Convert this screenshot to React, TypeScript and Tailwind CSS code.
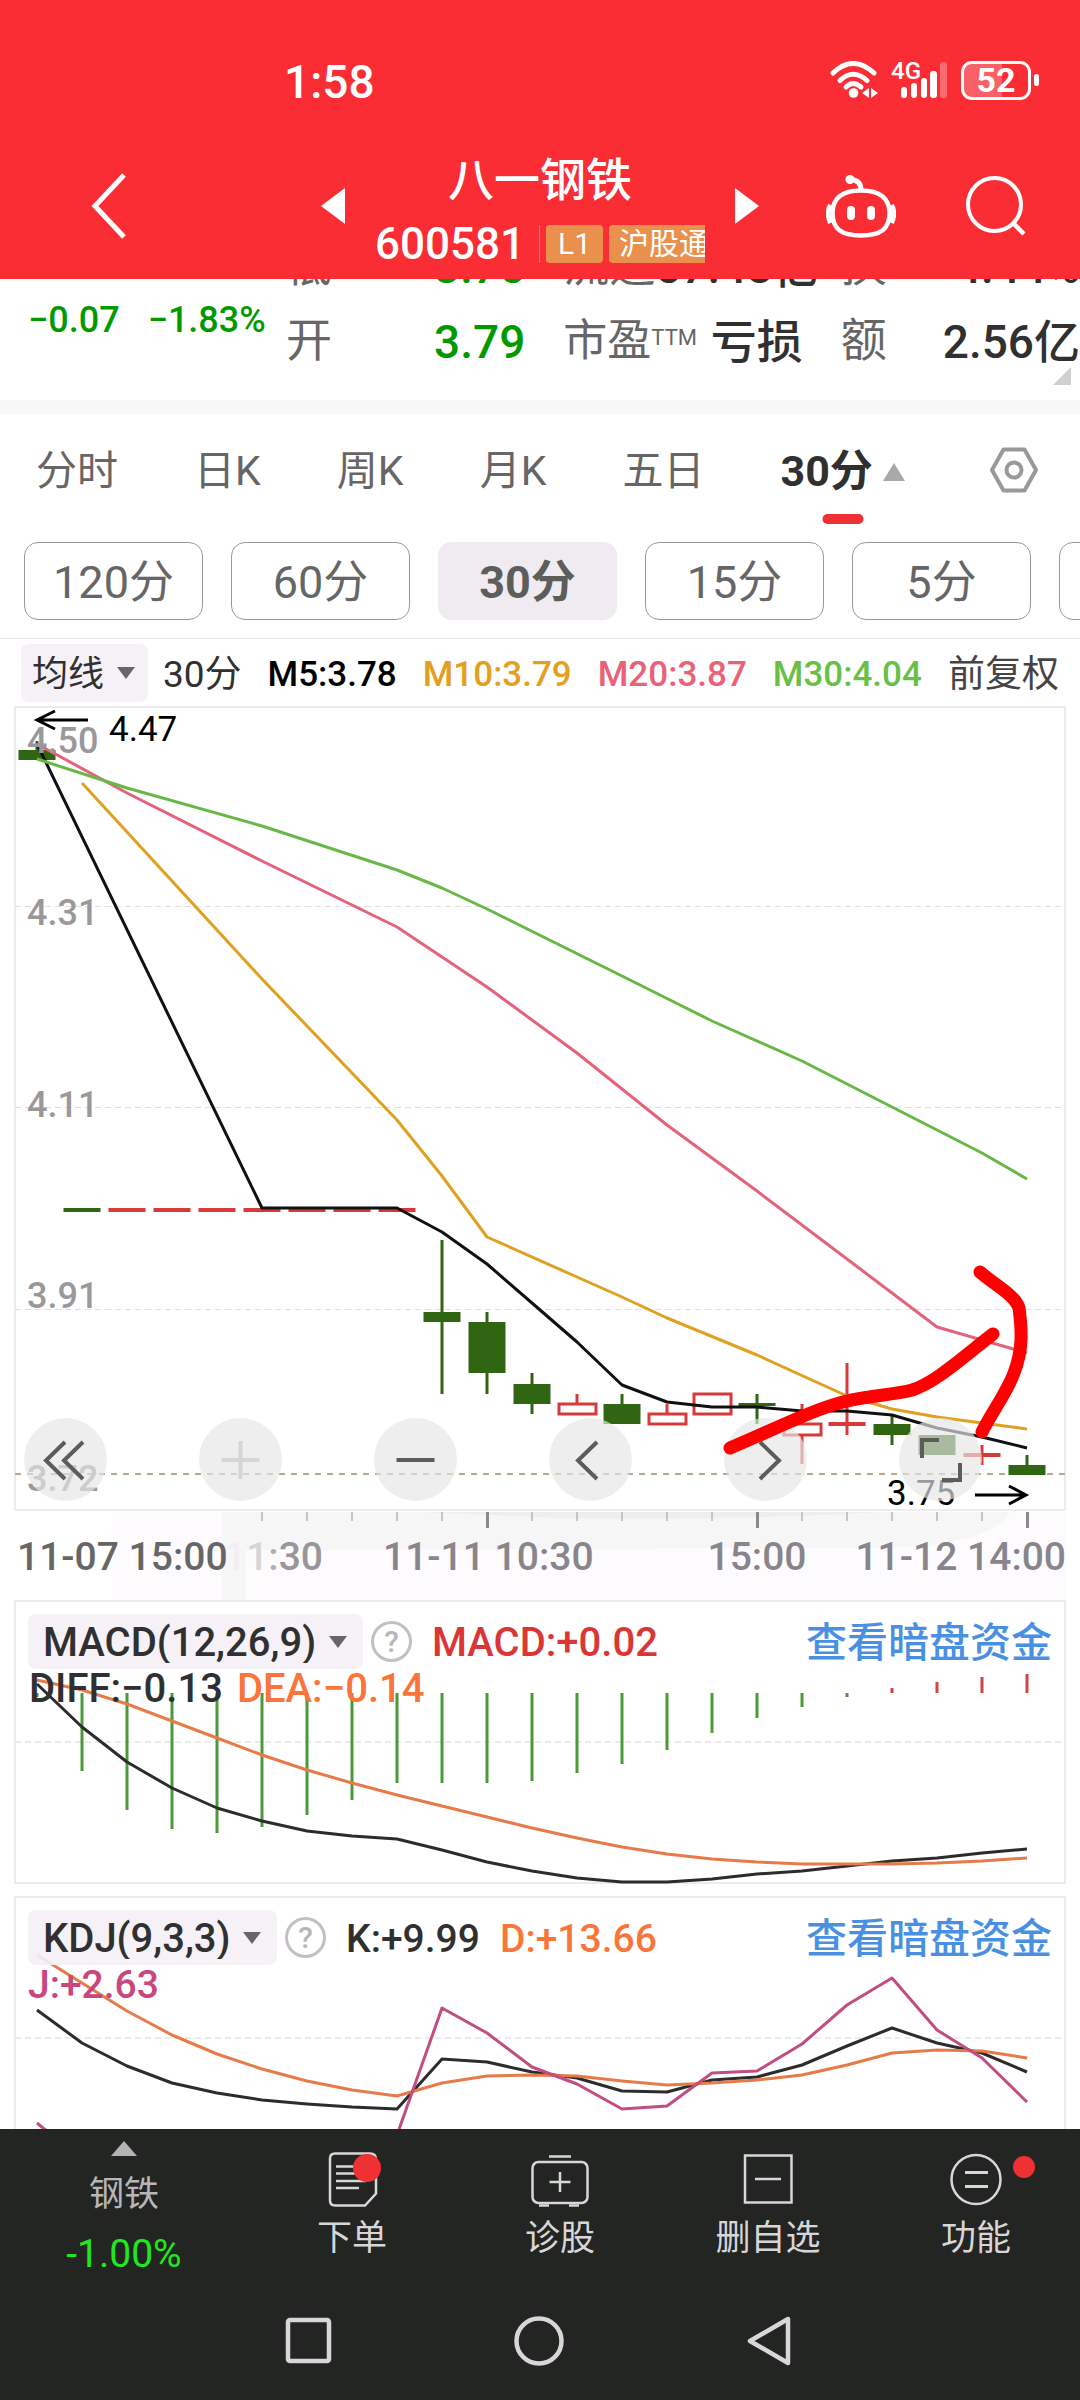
import React, { useState } from 'react';

const STEP = 45;
const FIRST_X = 37;

const xAt = (i: number): number => FIRST_X + STEP * i;

// [index, y] pairs -> polyline points
const toPoints = (pairs: number[][]): string => pairs.map(([i, y]) => `${xAt(i)},${y}`).join(' ');
const seriesPoints = (ys: number[]): string => ys.map((y, i) => `${xAt(i)},${y}`).join(' ');

interface Candle {
  i: number;
  kind: 'down' | 'up' | 'flat';
  top: number;
  bottom: number;
  high?: number;
  low?: number;
}

const GREEN = '#306512';
const RED = '#d83a3a';

const candles: Candle[] = [
  { i: 0, kind: 'down', top: 750, bottom: 760, high: 741 },
  { i: 1, kind: 'down', top: 1208, bottom: 1212 },
  { i: 2, kind: 'flat', top: 1208, bottom: 1212 },
  { i: 3, kind: 'flat', top: 1208, bottom: 1212 },
  { i: 4, kind: 'flat', top: 1208, bottom: 1212 },
  { i: 5, kind: 'flat', top: 1208, bottom: 1212 },
  { i: 6, kind: 'flat', top: 1208, bottom: 1212 },
  { i: 7, kind: 'flat', top: 1208, bottom: 1212 },
  { i: 8, kind: 'flat', top: 1208, bottom: 1212 },
  { i: 9, kind: 'down', top: 1312, bottom: 1322, high: 1240, low: 1394 },
  { i: 10, kind: 'down', top: 1322, bottom: 1373, high: 1312, low: 1394 },
  { i: 11, kind: 'down', top: 1384, bottom: 1404, high: 1373, low: 1414 },
  { i: 12, kind: 'up', top: 1403, bottom: 1415, high: 1394 },
  { i: 13, kind: 'down', top: 1404, bottom: 1424, high: 1394 },
  { i: 14, kind: 'up', top: 1413, bottom: 1425, high: 1404 },
  { i: 15, kind: 'up', top: 1393, bottom: 1415 },
  { i: 16, kind: 'down', top: 1403, bottom: 1406, high: 1394, low: 1424 },
  { i: 17, kind: 'up', top: 1423, bottom: 1436, high: 1404, low: 1464 },
  { i: 18, kind: 'flat', top: 1422, bottom: 1426, high: 1363, low: 1435 },
  { i: 19, kind: 'down', top: 1424, bottom: 1435, high: 1416, low: 1445 },
  { i: 20, kind: 'down', top: 1435, bottom: 1455 },
  { i: 21, kind: 'flat', top: 1453, bottom: 1457, high: 1445, low: 1465 },
  { i: 22, kind: 'down', top: 1465, bottom: 1475, high: 1455 },
];

const ma5 = [[0, 744], [5, 1208], [8, 1208], [9, 1232], [10, 1264], [11, 1303], [12, 1342], [13, 1385], [14, 1402], [15, 1407], [16, 1407], [17, 1411], [18, 1411], [19, 1415], [20, 1428], [21, 1437], [22, 1448]];
const ma10 = [[1, 783], [5, 979], [8, 1120], [9, 1176], [10, 1237], [12, 1277], [13, 1297], [14, 1318], [16, 1355], [18, 1396], [19, 1409], [20, 1417], [21, 1423], [22, 1429]];
const ma20 = [[0, 744], [2, 793], [5, 861], [8, 927], [9, 957], [10, 987], [12, 1053], [14, 1125], [16, 1191], [18, 1259], [20, 1327], [22, 1353]];
const ma30 = [[0, 759], [2, 788], [5, 826], [8, 870], [9, 888], [10, 909], [13, 976], [15, 1021], [17, 1061], [19, 1107], [21, 1153], [22, 1179]];

const macdZero = 1693;
const macdBars = [1697, 1771, 1810, 1829, 1833, 1827, 1815, 1800, 1783, 1783, 1783, 1781, 1773, 1764, 1750, 1733, 1718, 1707, 1697, 1688, 1682, 1677, 1674];
const diffLine = [1684, 1727, 1762, 1788, 1808, 1821, 1831, 1836, 1839, 1850, 1862, 1871, 1878, 1882, 1882, 1879, 1874, 1871, 1866, 1861, 1858, 1853, 1849];
const deaLine = [1680, 1690, 1704, 1721, 1738, 1755, 1770, 1783, 1795, 1806, 1817, 1828, 1838, 1847, 1854, 1859, 1862, 1864, 1864, 1864, 1863, 1861, 1858];

const kLine = [2010, 2043, 2066, 2083, 2093, 2100, 2104, 2107, 2109, 2059, 2062, 2072, 2078, 2091, 2092, 2080, 2077, 2065, 2046, 2028, 2043, 2053, 2072];
const dLine = [1955, 1983, 2011, 2035, 2054, 2069, 2081, 2090, 2096, 2083, 2076, 2075, 2076, 2081, 2085, 2083, 2080, 2075, 2065, 2053, 2050, 2051, 2058];
const jLine = [2123, 2160, 2180, 2190, 2190, 2180, 2170, 2160, 2135, 2008, 2033, 2067, 2084, 2109, 2106, 2073, 2071, 2044, 2005, 1978, 2030, 2058, 2102];

const StatusBar: React.FC = () => (
  <div className="flex h-[120px] items-center pt-[40px] pr-[41px] pl-[284px] text-white">
    <span className="pt-1 text-[46px] leading-none font-medium">1:58</span>
    <svg className="ml-auto h-[38px] w-[48px]" viewBox="832 60 48 38" fill="none" stroke="#fff" strokeWidth="5" strokeLinecap="round">
      <path d="M835 72 Q855 53 876 72" />
      <path d="M842 79.500 Q855 67 869 79.500" />
      <path d="M848 86 Q855 79 863 86" />
      <circle cx="855.500" cy="92" r="4.800" fill="#fff" stroke="none" />
      <path d="M871 87v10l-7-5zM873 87v10l7-5z" fill="#fff" stroke="none" />
    </svg>
    <div className="ml-[13px] flex items-end">
      <span className="mb-[19px] -mr-[20px] text-[24px] leading-[18px] font-medium">4G</span>
      <svg className="h-[38px] w-[48px]" viewBox="901 60 48 38" fill="#fff">
        <rect x="901" y="86" width="6" height="11" rx="3" />
        <rect x="911" y="82" width="6" height="15" rx="3" />
        <rect x="921" y="77" width="6" height="20" rx="3" />
        <rect x="930" y="70" width="7" height="27" rx="3" />
        <rect x="940" y="61" width="7" height="36" rx="3" opacity="0.3" />
      </svg>
    </div>
    <div className="ml-3 flex items-center">
      <div className="flex h-[39px] w-[70px] items-center justify-center rounded-[11px] border-[3px] border-white bg-linear-to-r from-white/25 from-60% to-transparent to-60% text-[34px] leading-none font-bold">
        52
      </div>
      <div className="ml-[3px] h-[12px] w-[5px] rounded-full bg-white"></div>
    </div>
  </div>
);

const Header: React.FC = () => (
  <header className="bg-[#f92d33] text-white">
    <StatusBar />
    <div className="flex h-[159px] items-center pt-3 pr-[54px] pl-[91px]">
      <button type="button" aria-label="返回">
        <svg className="h-[66px] w-[35px]" viewBox="0 0 35 66" fill="none" stroke="#fff" strokeWidth="5">
          <path d="M33 2 L4 33 L33 64" />
        </svg>
      </button>
      <div className="ml-auto flex items-center gap-[30px]">
        <button type="button" aria-label="上一只">
          <svg className="h-[36px] w-[24px]" viewBox="0 0 24 36" fill="#fff"><path d="M24 0v36L0 18z" /></svg>
        </button>
        <div className="mt-3 w-[330px] overflow-hidden">
          <h1 className="text-center text-[46px] leading-[64px] font-medium">八一钢铁</h1>
          <div className="flex items-center whitespace-nowrap">
            <span className="text-[44px] leading-[64px] font-medium">600581</span>
            <span className="ml-[14px] h-[38px] w-px shrink-0 bg-[#e8904c]"></span>
            <span className="ml-[6px] shrink-0 rounded-[4px] bg-[#e8904c] px-3 text-[30px] leading-[38px]">L1</span>
            <span className="ml-[6px] shrink-0 rounded-[4px] bg-[#e8904c] px-[10px] text-[30px] leading-[38px]">沪股通</span>
          </div>
        </div>
        <button type="button" aria-label="下一只">
          <svg className="h-[36px] w-[24px]" viewBox="0 0 24 36" fill="#fff"><path d="M0 0v36l24-18z" /></svg>
        </button>
      </div>
      <div className="ml-[67px] flex items-center gap-[70px]">
        <button type="button" aria-label="智能助手">
          <svg className="h-[64px] w-[70px]" viewBox="826 173 70 64" fill="none" stroke="#fff" strokeWidth="4.500">
            <path d="M861 189.500c19 0 28.500 8 28.500 22.500 0 16-9 22.500-28.500 22.500s-28.500-6.500-28.500-22.500c0-14.500 9.500-22.500 28.500-22.500z" />
            <path d="M830.500 204q-4.500 8 0 18M891.500 204q4.500 8 0 18" strokeWidth="5" />
            <path d="M861 189c0-7-4-10-10-10.500" strokeWidth="5" />
            <circle cx="850" cy="178.500" r="4.500" fill="#fff" stroke="none" />
            <path d="M851 209v6M871 209v6" strokeWidth="8" strokeLinecap="round" />
          </svg>
        </button>
        <button type="button" aria-label="搜索">
          <svg className="h-[60px] w-[60px]" viewBox="966 177 60 60" fill="none" stroke="#fff" strokeWidth="4">
            <circle cx="994.500" cy="205.500" r="26.500" />
            <path d="M1013 224l11 11" strokeWidth="4.500" />
          </svg>
        </button>
      </div>
    </div>
  </header>
);

interface QuoteProps {
  label: React.ReactNode;
  value: string;
  green?: boolean;
}

const Quote: React.FC<QuoteProps> = ({ label, value, green }) => (
  <div className="flex h-[75px] items-center justify-between whitespace-nowrap">
    <dt className="text-[#666]">{label}</dt>
    <dd className={`pt-1 font-medium ${green ? 'text-[#009a00]' : 'text-[#303030]'}`}>{value}</dd>
  </div>
);

const QuotePanel: React.FC = () => (
  <section className="relative flex h-[121px] items-end overflow-hidden bg-white pb-[22px] pl-[28px]">
    <div className="flex h-[116px] w-[258px] shrink-0 gap-[28px] text-[36px] leading-[116px] font-medium whitespace-nowrap text-[#009a00]">
      <span>−0.07</span>
      <span>−1.83%</span>
    </div>
    <dl className="grid flex-1 grid-cols-3 gap-x-[38px] text-[46px] leading-[75px]">
      <Quote label="低" value="3.75" green />
      <Quote label="流通" value="57.48亿" />
      <Quote label="换" value="4.44%" />
      <Quote label="开" value="3.79" green />
      <Quote label={<span className="text-[44px]">市盈<sup className="text-[22px]">TTM</sup></span>} value="亏损" />
      <Quote label="额" value="2.56亿" />
    </dl>
    <svg className="absolute right-[9px] bottom-[15px] h-[18px] w-[18px]" viewBox="0 0 18 18" fill="#d0d0d0"><path d="M18 0v18H0z" /></svg>
  </section>
);

const tabs = ['分时', '日K', '周K', '月K', '五日', '30分'];
const periods = ['120分', '60分', '30分', '15分', '5分', '1分'];

const ChartTabs: React.FC = () => {
  const [tab, setTab] = useState('30分');
  const [period, setPeriod] = useState('30分');

  return (
    <div className="border-b border-[#e6e6e6]">
      <nav className="flex h-[112px] items-center justify-between pr-[42px] pl-[36px] text-[41px]">
        {tabs.map((t) => (
          <button
            key={t}
            type="button"
            onClick={() => setTab(t)}
            className={`relative flex h-full items-center pt-[3px] ${t === tab ? 'text-[43px] font-bold text-[#303030]' : 'text-[#666]'}`}
          >
            {t}
            {t === '30分' && (
              <svg className="ml-[10px] h-[18px] w-[22px]" viewBox="0 0 22 18" fill="#aaa7aa"><path d="M11 0l11 18H0z" /></svg>
            )}
            {t === tab && <span className="absolute bottom-[2px] left-1/2 h-[10px] w-[41px] -translate-x-1/2 rounded-full bg-[#ef3133]"></span>}
          </button>
        ))}
        <button type="button" aria-label="设置" className="ml-[9px]">
          <svg className="h-[46px] w-[48px]" viewBox="0 0 48 46" fill="none" stroke="#999" strokeWidth="4" strokeLinejoin="round">
            <path d="M13.500 2.500h21L46 23 34.500 43.500h-21L2 23z" />
            <circle cx="24" cy="23" r="7.500" />
          </svg>
        </button>
      </nav>
      <div className="mt-4 mb-[18px] flex gap-[28px] overflow-hidden pl-[24px] text-[45px]">
        {periods.map((p) => (
          <button
            key={p}
            type="button"
            onClick={() => setPeriod(p)}
            className={`h-[78px] w-[179px] shrink-0 rounded-[14px] pt-[3px] leading-none ${
              p === period ? 'bg-[#efebf0] font-bold text-[#5c5e5c]' : 'border border-[#999] text-[#666]'
            }`}
          >
            {p}
          </button>
        ))}
      </div>
    </div>
  );
};

interface PickerProps {
  label: string;
  options: string[];
  className: string;
}

const Picker: React.FC<PickerProps> = ({ label, options, className }) => (
  <label className={`flex shrink-0 items-center rounded-[8px] bg-[#f4f0f5]/90 text-[#303030] ${className}`}>
    <select aria-label={label} className="appearance-none bg-transparent pt-[3px] outline-none">
      {options.map((o) => <option key={o}>{o}</option>)}
    </select>
    <svg className="ml-3 h-[12px] w-[18px]" viewBox="0 0 18 12" fill="#666"><path d="M0 0h18L9 12z" /></svg>
  </label>
);

const MaLegend: React.FC = () => (
  <div className="flex h-[67px] items-center gap-[26px] pr-[21px] pl-[21px] text-[35px] leading-none font-medium whitespace-nowrap">
    <div className="flex items-center gap-[15px]">
      <Picker label="主图指标" options={['均线']} className="h-[58px] pr-[13px] pl-[11px] text-[36px] font-normal" />
      <span className="pt-[3px] text-[37px] font-normal text-[#303030]">30分</span>
    </div>
    <span className="pt-[3px] text-black">M5:3.78</span>
    <span className="pt-[3px] text-[#e3a01e]">M10:3.79</span>
    <span className="pt-[3px] text-[#ea6178]">M20:3.87</span>
    <span className="pt-[3px] text-[#6abf47]">M30:4.04</span>
    <span className="ml-auto pt-[3px] text-[37px] font-normal text-[#444]">前复权</span>
  </div>
);

const CandleShape: React.FC<{ candle: Candle }> = ({ candle }) => {
  const x = xAt(candle.i);
  const color = candle.kind === 'down' ? GREEN : RED;
  return (
    <g>
      {candle.high && <rect x={x - 1.5} y={candle.high} width="3" height={candle.top - candle.high} fill={color} />}
      {candle.low && <rect x={x - 1.5} y={candle.bottom} width="3" height={candle.low - candle.bottom} fill={color} />}
      {candle.kind === 'up' ? (
        <rect x={x - 18} y={candle.top + 1} width="37" height={candle.bottom - candle.top - 2} fill="#fff" stroke={color} strokeWidth="3" />
      ) : (
        <rect x={x - 18.5} y={candle.top} width="37" height={candle.bottom - candle.top} fill={color} />
      )}
    </g>
  );
};

const chartButtons = [
  { label: '最早', d: 'M41 24L22 42.500 41 61M59 24L40 42.500 59 61' },
  { label: '放大', d: 'M41.500 23v38M22.500 42h38' },
  { label: '缩小', d: 'M22.500 42h38' },
  { label: '向左', d: 'M48 24L29 42.500 48 61' },
  { label: '向右', d: 'M36 24L55 42.500 36 61' },
  { label: '全屏', d: 'M40 22H23v18M61 45v17H43' },
];

const PriceChart: React.FC = () => (
  <div className="relative mx-[14px]">
    <svg className="block h-auto w-full" viewBox="14 706 1052 806">
      <rect x="15" y="707" width="1050" height="803" fill="#fff" stroke="#ececee" strokeWidth="2" />
      <g stroke="#dedede" strokeWidth="1" strokeDasharray="6 4">
        <path d="M15 906.500H1065M15 1107.500H1065M15 1309.500H1065" />
      </g>
      <path d="M15 1474H1065" stroke="#b8a98a" strokeWidth="2" strokeDasharray="6 6" />
      {candles.map((c) => <CandleShape key={c.i} candle={c} />)}
      <g fill="none" strokeWidth="3" strokeLinejoin="round">
        <polyline points={toPoints(ma5)} stroke="#111" />
        <polyline points={toPoints(ma10)} stroke="#e0a021" />
        <polyline points={toPoints(ma20)} stroke="#e4637a" />
        <polyline points={toPoints(ma30)} stroke="#69b847" />
      </g>
      <g fill="#9a989a" fontSize="36" fontWeight="500">
        <text x="27" y="753">4.50</text>
        <text x="27" y="925">4.31</text>
        <text x="27" y="1117">4.11</text>
        <text x="27" y="1308">3.91</text>
        <text x="27" y="1491">3.72</text>
      </g>
      <g fill="none" stroke="#000" strokeWidth="3">
        <path d="M88 720H37M55 711L37 720l18 9" />
        <path d="M975 1495h51M1009 1486l17 9-17 9" />
      </g>
      <g fill="#000" fontSize="35">
        <text x="109" y="741">4.47</text>
        <text x="887" y="1505">3.75</text>
      </g>
    </svg>
    <div className="absolute right-[84px] bottom-[11px] left-[10px] flex justify-between">
      {chartButtons.map((b) => (
        <button key={b.label} type="button" aria-label={b.label} className="size-[83px] rounded-full bg-[#e6e6e6]/67">
          <svg viewBox="0 0 83 83" fill="none" stroke={b.label === '放大' ? '#d6d4d6' : '#5c5c5c'} strokeWidth="4">
            <path d={b.d} />
          </svg>
        </button>
      ))}
    </div>
    {/* hand-drawn trend mark */}
    <svg className="pointer-events-none absolute inset-0 h-full w-full" viewBox="14 706 1052 806" fill="none" stroke="#fe0000" strokeWidth="13" strokeLinecap="round" strokeLinejoin="round">
      <path d="M730 1448C775 1429 812 1410 843 1402C870 1395 895 1395 912 1390C935 1383 962 1358 993 1334" />
      <path d="M980 1272C995 1285 1015 1295 1019 1308C1022 1330 1023 1350 1014 1373C1007 1392 992 1412 982 1432" />
    </svg>
  </div>
);

const TimeAxis: React.FC = () => (
  <svg className="mx-[14px] block h-auto w-[calc(100%-28px)]" viewBox="14 1512 1052 88">
    <rect x="112" y="1512" width="954" height="88" fill="#fefbfe" />
    <path d="M222 1512H1010Q990 1546 880 1548L246 1550V1600H222z" fill="#f7f6f7" />
    <path d="M420 1512H880Q760 1520 560 1518z" fill="#efeeef" />
    {Array.from({ length: 18 }, (_, n) => n + 5).map((i) => {
      const major = i === 10 || i === 16 || i === 22;
      return <rect key={i} x={xAt(i) - 1} y="1512" width={major ? 3 : 2} height={major ? 16 : 9} fill={major ? '#8a8a8a' : '#c6c4c6'} />;
    })}
    <g fill="#88868a" fontSize="39" fontWeight="500">
      <text x="17" y="1570" fill="#666">11-07 15:00</text>
      <text x="323" y="1570" textAnchor="end">
        <tspan fill="#f1eff1">1</tspan><tspan fill="#d6d4d6">1</tspan><tspan fill="#b0aeb0">:</tspan><tspan fill="#98969a">30</tspan>
      </text>
      <text x="383" y="1570">11-11 10:30</text>
      <text x="757" y="1570" textAnchor="middle">15:00</text>
      <text x="1066" y="1570" textAnchor="end">11-12 14:00</text>
    </g>
  </svg>
);

const HelpButton: React.FC = () => (
  <button type="button" aria-label="指标说明" className="ml-2 size-[41px] shrink-0 rounded-full border-[3px] border-[#c2c0c2] text-[30px] leading-[34px] text-[#b8b6b8]">
    ?
  </button>
);

const MacdPanel: React.FC = () => (
  <section className="relative mx-[14px]">
    <svg className="block h-auto w-full" viewBox="14 1600 1052 284">
      <rect x="15" y="1601" width="1050" height="282" fill="#fff" stroke="#ececee" strokeWidth="2" />
      <path d="M15 1742H1065" stroke="#ebebeb" strokeWidth="2" strokeDasharray="6 4" />
      {macdBars.map((y, i) => (
        <rect key={i} x={xAt(i) - 1.5} y={Math.min(y, macdZero)} width="3" height={Math.abs(y - macdZero)} fill={y > macdZero ? '#4a9a3a' : '#d14545'} />
      ))}
      <g fill="none" strokeWidth="3" strokeLinejoin="round">
        <polyline points={seriesPoints(diffLine)} stroke="#2c2c2c" />
        <polyline points={seriesPoints(deaLine)} stroke="#e67a48" />
      </g>
    </svg>
    <div className="absolute inset-x-0 top-0 px-[14px] pt-[14px] text-[40px] font-medium whitespace-nowrap">
      <div className="flex h-[55px] items-center leading-none">
        <Picker label="副图指标一" options={['MACD(12,26,9)']} className="h-[55px] pr-[16px] pl-[15px]" />
        <HelpButton />
        <span className="ml-[20px] pt-[3px] text-[#dc3535]">MACD:+0.02</span>
        <a href="#macd" className="ml-auto pt-[3px] text-[41px] text-[#4a90e2]">查看暗盘资金</a>
      </div>
      <div className="mt-[2px] flex gap-[14px] pl-px leading-[36px]">
        <span className="text-[#303030]">DIFF:−0.13</span>
        <span className="text-[#fa7539]">DEA:−0.14</span>
      </div>
    </div>
  </section>
);

const KdjPanel: React.FC = () => (
  <section className="relative mx-[14px] mt-3">
    <svg className="block h-auto w-full" viewBox="14 1896 1052 233">
      <path d="M15 2129V1897H1065V2129" fill="#fff" stroke="#ececee" strokeWidth="2" />
      <path d="M15 2038H1065" stroke="#ebebeb" strokeWidth="2" strokeDasharray="6 4" />
      <g fill="none" strokeWidth="3" strokeLinejoin="round">
        <polyline points={seriesPoints(kLine)} stroke="#2c2c2c" />
        <polyline points={seriesPoints(dLine)} stroke="#e67a48" />
        <polyline points={seriesPoints(jLine)} stroke="#c04e80" />
      </g>
    </svg>
    <div className="absolute inset-x-0 top-0 px-[14px] pt-[14px] text-[40px] font-medium whitespace-nowrap">
      <div className="flex h-[55px] items-center leading-none">
        <Picker label="副图指标二" options={['KDJ(9,3,3)']} className="h-[55px] pr-[16px] pl-[15px]" />
        <HelpButton />
        <span className="ml-[20px] pt-[3px] text-[39px] text-[#303030]">K:+9.99</span>
        <span className="ml-[20px] pt-[3px] text-[39px] text-[#fa7539]">D:+13.66</span>
        <a href="#kdj" className="ml-auto pt-[3px] text-[41px] text-[#4a90e2]">查看暗盘资金</a>
      </div>
      <div className="mt-[2px] text-[39px] leading-[36px] text-[#c9467f]">J:+2.63</div>
    </div>
  </section>
);

const ActionBar: React.FC = () => (
  <div className="flex h-[157px] text-[35px] leading-[40px] text-[#d8d6d8]">
    <button type="button" className="flex w-[248px] flex-col items-center pt-3">
      <svg className="h-[15px] w-[26px]" viewBox="0 0 26 15" fill="#b4b2b4"><path d="M13 0l13 15H0z" /></svg>
      <span className="mt-[19px] text-[#b8b6b8]">钢铁</span>
      <span className="mt-[19px] text-[39px] text-[#1fe81f]">-1.00%</span>
    </button>
    <button type="button" className="flex flex-1 flex-col items-center pt-[20px]">
      <svg className="h-[60px] w-[60px]" viewBox="322 2149 60 60" fill="none" stroke="#d8d6d8" strokeWidth="2.500">
        <path d="M335 2153.500h35q6 0 6 6v34l-11 12h-30q-5 0-5-5v-42q0-5 5-5z" />
        <path d="M336 2166.500h28M336 2173.500h30M336 2181h30M336 2188h23" />
        <circle cx="367" cy="2168" r="14" fill="#ef3133" stroke="none" />
      </svg>
      <span className="mt-[10px]">下单</span>
    </button>
    <button type="button" className="flex flex-1 flex-col items-center pt-[20px]">
      <svg className="h-[60px] w-[60px]" viewBox="530 2149 60 60" fill="none" stroke="#d8d6d8" strokeWidth="2.500">
        <rect x="532.500" y="2162" width="55" height="41" rx="6" />
        <path d="M549 2156.500h22M539 2205.500h10M569 2205.500h10M549.500 2182h21M560 2172v20" />
      </svg>
      <span className="mt-[10px]">诊股</span>
    </button>
    <button type="button" className="flex flex-1 flex-col items-center pt-[20px]">
      <svg className="h-[60px] w-[60px]" viewBox="737 2149 60 60" fill="none" stroke="#d8d6d8" strokeWidth="2.500">
        <rect x="744" y="2155.500" width="46.500" height="47" />
        <path d="M754 2179h26" />
      </svg>
      <span className="mt-[10px]">删自选</span>
    </button>
    <button type="button" className="relative flex flex-1 flex-col items-center pt-[20px]">
      <svg className="h-[60px] w-[60px]" viewBox="945 2149 60 60" fill="none" stroke="#d8d6d8" strokeWidth="2.500">
        <circle cx="975" cy="2179.500" r="24.500" />
        <path d="M964 2172.500h23M964 2186.500h23" strokeWidth="3" />
      </svg>
      <span className="mt-[10px]">功能</span>
      <span className="absolute top-[27px] right-[45px] size-[22px] rounded-full bg-[#ef3133]"></span>
    </button>
  </div>
);

const SystemNav: React.FC = () => (
  <div className="flex h-[114px] items-center justify-between pr-[286px] pb-[4px] pl-[284px]">
    <button type="button" aria-label="最近任务">
      <svg className="size-[50px]" viewBox="0 0 50 50" fill="none" stroke="#d8d6d8" strokeWidth="4.500"><rect x="4" y="4" width="41" height="41" rx="2" /></svg>
    </button>
    <button type="button" aria-label="主屏幕">
      <svg className="size-[50px]" viewBox="0 0 50 50" fill="none" stroke="#d8d6d8" strokeWidth="4.500"><circle cx="25" cy="25" r="22.500" /></svg>
    </button>
    <button type="button" aria-label="返回上级">
      <svg className="size-[50px]" viewBox="0 0 50 50" fill="none" stroke="#d8d6d8" strokeWidth="4.500" strokeLinejoin="round"><path d="M44 3v44L6 25z" /></svg>
    </button>
  </div>
);

const App: React.FC = () => (
  <div className="overflow-hidden bg-white font-['Roboto','Noto_Sans_CJK_SC',sans-serif]">
    <Header />
    <main>
      <QuotePanel />
      <div className="h-[14px] bg-[#f7f7f7]"></div>
      <ChartTabs />
      <MaLegend />
      <PriceChart />
      <TimeAxis />
      <MacdPanel />
      <KdjPanel />
    </main>
    <footer className="bg-[#222522]">
      <ActionBar />
      <SystemNav />
    </footer>
  </div>
);

export default App;
